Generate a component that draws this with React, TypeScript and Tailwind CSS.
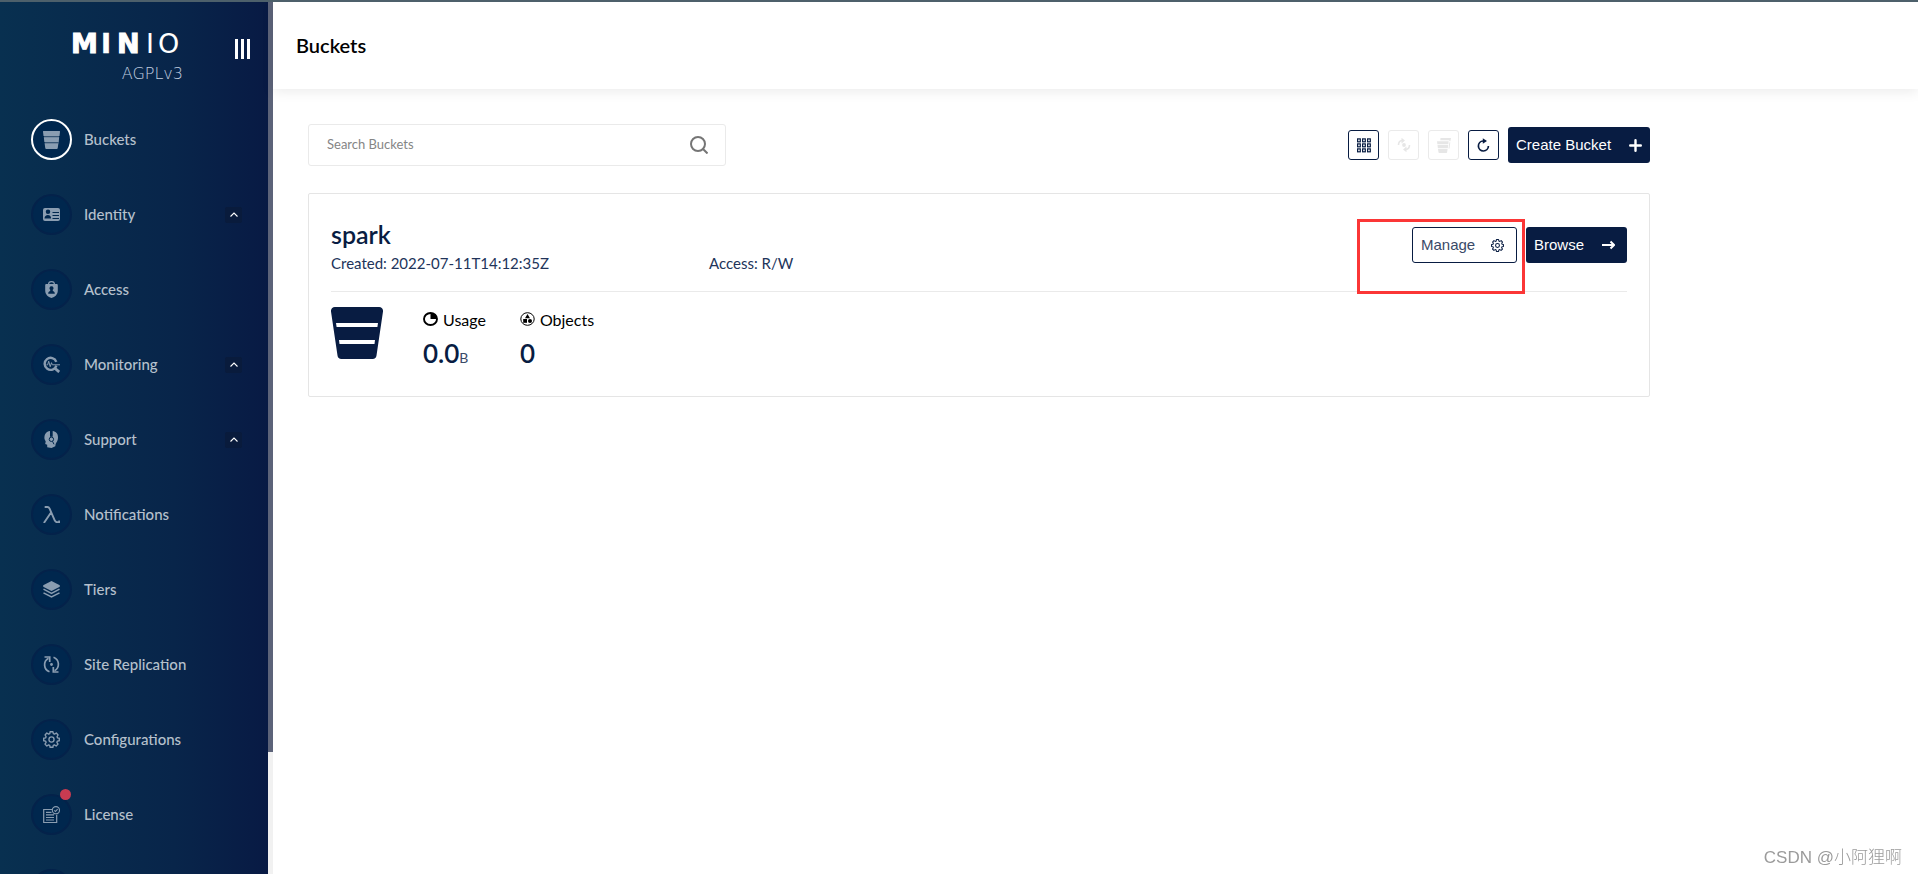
import type { ReactNode } from "react";
import { useState } from "react";
import clsx from "clsx";

type IconProps = { className?: string };

function BucketIcon({ className }: IconProps) {
  return (
    <svg viewBox="0 0 52 52" fill="currentColor" className={className}>
      <path
        fillRule="evenodd"
        d="M4 0h44a4 4 0 0 1 4 4.500L45.500 48.500a4 4 0 0 1-4 3.500h-31a4 4 0 0 1-4-3.500L0 4.500A4 4 0 0 1 4 0ZM5 16l.600 4h40.800l.600-4ZM8 33l.500 4h35l.500-4Z"
      />
    </svg>
  );
}

function SmallBucketIcon({ className }: IconProps) {
  return (
    <svg viewBox="0 0 17 18" fill="currentColor" className={className}>
      <path d="M.6 0h15.800a.6.6 0 0 1 .6.7L16.500 5H.5L0 .7A.6.6 0 0 1 .6 0ZM.8 6.200h15.400l-.6 4.800H1.400ZM1.600 12.200h13.800l-.7 5a1 1 0 0 1-1 .8H3.300a1 1 0 0 1-1-.8Z" />
      <path d="M1 5h15v7.500H1.800Z" opacity=".4" />
    </svg>
  );
}

function IdentityIcon({ className }: IconProps) {
  return (
    <svg viewBox="0 0 17 17" className={className}>
      <path
        fill="currentColor"
        fillRule="evenodd"
        d="M2 2h13a2 2 0 0 1 2 2v9a2 2 0 0 1-2 2H2a2 2 0 0 1-2-2V4a2 2 0 0 1 2-2ZM5 3.500A2 2 0 0 0 5 8a2 2 0 0 0 0-4.500ZM1.500 12.500h6.600c0-2.200-1.200-3.500-3.200-3.500s-3.400 1.300-3.400 3.500ZM9.500 6v1H16V6ZM9.500 9v1H16V9ZM9.500 12v1H16v-1Z"
      />
    </svg>
  );
}

function AccessIcon({ className }: IconProps) {
  return (
    <svg viewBox="0 0 17 17" className={className}>
      <path d="M5.500 3.500C5.500 1.500 6.800.6 8.500.6s3 .9 3 2.900" fill="none" stroke="currentColor" strokeWidth="1.100" />
      <path
        fill="currentColor"
        fillRule="evenodd"
        d="M3.500 3h10c.8 0 1.300.5 1.300 1.300v5.200c0 4-2.800 6.500-6.300 7.500-3.500-1-6.300-3.500-6.300-7.500V4.300C2.200 3.500 2.700 3 3.500 3Zm5 2.200a2 2 0 0 0-1.100 3.700l-.4 1c-1.200.4-1.800 1.300-1.800 2.800h6.600c0-1.500-.6-2.400-1.800-2.800l-.4-1A2 2 0 0 0 8.500 5.200Z"
      />
    </svg>
  );
}

function MonitoringIcon({ className }: IconProps) {
  return (
    <svg viewBox="0 0 17 17" fill="none" stroke="currentColor" className={className}>
      <path d="M13.300 5.800a6 6 0 1 0 .1 3.800" strokeWidth="2.400" />
      <path d="M3.500 8.800h1.200l1-3.600 1.500 5.500 1.300-4 .8 2.100H17" strokeWidth="1" />
      <path d="m11.500 12 4.700 4" strokeWidth="2.800" />
    </svg>
  );
}

function SupportIcon({ className }: IconProps) {
  return (
    <svg viewBox="0 0 17 17" className={className}>
      <path
        fill="currentColor"
        d="M7 0v5.700h2.700V0c3.300.4 5.300 2.600 5.300 6.200 0 2.600-.6 3.900-1.600 5.300-.6 1-.9 2-1.100 3.800L8.500 17l-4.300-.8v-2.400l-2-.8.5-2.600L1.500 8C1 3.200 3.200.6 7 0Z"
      />
      <path d="m9.500 10.300 1.500 3" stroke="#00274e" strokeWidth="1" />
      <circle cx="8.400" cy="8.300" r="2.200" fill="none" stroke="#00274e" />
    </svg>
  );
}

function LambdaIcon({ className }: IconProps) {
  return (
    <svg viewBox="0 0 17 17" fill="none" stroke="currentColor" strokeWidth="1.900" className={className}>
      <path d="M1.800 1h2.600c1.100 0 1.700.6 2.200 1.700l5 11.500c.6 1.400 1.200 2 2.400 2h2.200v-1.800M8.200 6.200.9 17M2.600.2v1.900" />
    </svg>
  );
}

function TiersIcon({ className }: IconProps) {
  return (
    <svg viewBox="0 0 17 17" className={className}>
      <path d="m8.500 0 8.300 4.200v1.500L8.500 10 .2 5.700V4.200Z" fill="currentColor" />
      <path d="m.5 8.200 8 4.200 8-4.200M.5 11.800l8 4.200 8-4.200" fill="none" stroke="currentColor" strokeWidth="1.500" />
    </svg>
  );
}

function ReplicationIcon({ className }: IconProps) {
  return (
    <svg viewBox="0 0 17 17" fill="none" stroke="currentColor" strokeWidth="1.700" className={className}>
      <path d="M6.500 15.800A7.500 7.500 0 0 1 5.500 2.200M10.500 1.200a7.500 7.500 0 0 1 1 13.600" />
      <path d="M1.500 1h5.200v5M15.500 16h-5.200v-5" />
      <circle cx="8.500" cy="8.500" r="1.400" fill="currentColor" stroke="none" />
    </svg>
  );
}

function GearIcon({ className }: IconProps) {
  return (
    <svg viewBox="0 0 24 24" fill="none" stroke="currentColor" strokeWidth="1.900" strokeLinejoin="round" className={className}>
      <circle cx="12" cy="12" r="3.600" />
      <path d="M10 1h4l.6 2.800 1.700.7 2.500-1.600 2.500 2.700-1.500 2.500.7 1.600L23 10.200v3.600l-2.700.5-.7 1.700 1.600 2.500-2.600 2.600-2.500-1.600-1.600.7L14 23h-4l-.5-2.800-1.600-.7-2.500 1.600-2.600-2.600L4.400 16l-.7-1.700L1 13.800v-3.600l2.700-.5.7-1.600-1.500-2.500 2.500-2.700 2.500 1.600 1.700-.7Z" />
    </svg>
  );
}

function LicenseIcon({ className }: IconProps) {
  return (
    <svg viewBox="0 0 17 17" fill="none" stroke="currentColor" className={className}>
      <path d="M9 3.500H.7v13h13V8.700" strokeWidth="1.200" />
      <path d="M3 6.300h5.500M3 8.900h8M3 11.500h8M3 14h8" strokeWidth="1.200" />
      <circle cx="12.900" cy="4.200" r="3.600" strokeWidth="1.100" />
      <path d="m11.300 4.300 1.200 1.200 2.100-2.400" strokeWidth="1.100" />
    </svg>
  );
}

function SearchIcon({ className }: IconProps) {
  return (
    <svg viewBox="0 0 18 18" fill="none" stroke="currentColor" strokeWidth="2" className={className}>
      <circle cx="8" cy="8" r="7" />
      <path d="m12.500 12.500 5 5" />
    </svg>
  );
}

function GridIcon({ className }: IconProps) {
  const cells = [0, 5, 10];
  return (
    <svg viewBox="0 0 14 15" fill="none" stroke="currentColor" strokeWidth="1.200" className={className}>
      {cells.map((y) =>
        cells.map((x) => <rect key={`${x}-${y}`} x={x + 0.6} y={y + 0.9} width="2.700" height="2.900" />)
      )}
    </svg>
  );
}

function LifecycleIcon({ className }: IconProps) {
  return (
    <svg viewBox="0 0 14 14" fill="none" stroke="currentColor" strokeWidth="1.600" className={className}>
      <path d="M1.500 7c0-2.700 1.300-4.200 3.700-4.500M12.500 7c0 2.700-1.300 4.200-3.700 4.500" />
      <path d="M4.500-.2 8 2.500l-3.500 3ZM9.500 8.500 6 11.500l3.500 2.700Z" fill="currentColor" stroke="none" />
      <circle cx="7" cy="7" r="1.900" fill="currentColor" stroke="none" />
    </svg>
  );
}

function MultiBucketIcon({ className }: IconProps) {
  return (
    <svg viewBox="0 0 14 15" fill="currentColor" className={className}>
      <path d="M3.500 0H14l-.6 3.200h-1V2.300H3.300ZM12.400 4.300h.9l-.8 6.200h-1ZM0 3.200h11.700l-.4 3H.4ZM.5 7h10.700l-.4 3.300H.9ZM1 11.100h9.600l-.5 3.100a.8.8 0 0 1-.8.8h-7a.8.8 0 0 1-.8-.8Z" />
    </svg>
  );
}

function RefreshIcon({ className }: IconProps) {
  return (
    <svg viewBox="0 0 13 14" fill="none" stroke="currentColor" strokeWidth="1.700" className={className}>
      <path d="M7.500 3H6.200a5 5 0 1 0 5.200 5" />
      <path d="M5.800.2 10 3 5.800 5.800Z" fill="currentColor" stroke="none" />
    </svg>
  );
}

function PlusIcon({ className }: IconProps) {
  return (
    <svg viewBox="0 0 13 13" stroke="currentColor" strokeWidth="2.400" strokeLinecap="round" className={className}>
      <path d="M6.500 1.200v10.600M1.200 6.500h10.600" />
    </svg>
  );
}

function ArrowIcon({ className }: IconProps) {
  return (
    <svg viewBox="0 0 13 10" fill="none" stroke="currentColor" strokeWidth="2" className={className}>
      <path d="M0 5h11.500" />
      <path d="M8.500 1.500 12 5 8.500 8.500" />
    </svg>
  );
}

function UsageIcon({ className }: IconProps) {
  return (
    <svg viewBox="0 0 15 14" className={className}>
      <ellipse cx="7.500" cy="7" rx="6.500" ry="6" fill="none" stroke="currentColor" strokeWidth="1.900" />
      <path d="M7.500 1v6h6.500A6.500 6 0 0 0 7.500 1Z" fill="currentColor" />
    </svg>
  );
}

function ObjectsIcon({ className }: IconProps) {
  return (
    <svg viewBox="0 0 15 14" fill="currentColor" className={className}>
      <ellipse cx="7.500" cy="7" rx="6.700" ry="6.300" fill="none" stroke="currentColor" />
      <path d="M7.500 2 10 6.300H5Z" />
      <rect x="3.200" y="7" width="3.800" height="3.800" />
      <circle cx="10" cy="9" r="2" />
    </svg>
  );
}

function Logo() {
  return (
    <div className="flex flex-col items-end text-white">
      <svg viewBox="0 0 112 36" width="112" height="36" fill="currentColor" role="img" aria-label="MinIO">
        <g fontFamily="DejaVu Sans" fontSize="27" fontWeight="700" stroke="currentColor">
          <text x="0" y="29">M</text>
          <text x="30" y="29" strokeWidth=".5">I</text>
          <text x="46" y="29">N</text>
        </g>
        <g fontFamily="DejaVu Sans" fontSize="27" fontWeight="400">
          <text x="75" y="29">I</text>
          <text x="87" y="29">O</text>
        </g>
      </svg>
      <span className="mt-0.5 font-['DejaVu_Sans'] text-base leading-6 font-light text-[#c3cfe0]">AGPLv3</span>
    </div>
  );
}

interface MenuItemProps {
  label: string;
  icon: ReactNode;
  active?: boolean;
  expandable?: boolean;
  badge?: boolean;
}

function MenuItem({ label, icon, active, expandable, badge }: MenuItemProps) {
  return (
    <li className="h-[75px]">
      <a href="#" className="flex items-center pr-[26px] pl-[31px]">
        <span
          className={clsx(
            "relative flex h-[41px] w-[41px] items-center justify-center rounded-full border-2 bg-[#00274e] text-[#8a9db1]",
            active ? "border-white" : "border-[#04224a]"
          )}
        >
          {icon}
          {badge && <span className="absolute -top-[7px] -right-px h-[11px] w-[11px] rounded-full bg-[#c83b51]" />}
        </span>
        <span className="ml-3 flex-1 text-[15px] font-medium text-[#b5c0cc]">{label}</span>
        {expandable && (
          <span className="flex h-4 w-[17px] items-center justify-center rounded-xs bg-[#091b3c]">
            <svg viewBox="0 0 8 5" className="h-[5px] w-2" fill="none" stroke="#fff" strokeWidth="1.100">
              <path d="M.5 4.500 4 1l3.500 3.500" />
            </svg>
          </span>
        )}
      </a>
    </li>
  );
}

const menu: MenuItemProps[] = [
  { label: "Buckets", icon: <SmallBucketIcon className="h-[18px] w-[17px]" />, active: true },
  { label: "Identity", icon: <IdentityIcon className="size-[17px]" />, expandable: true },
  { label: "Access", icon: <AccessIcon className="size-[17px]" /> },
  { label: "Monitoring", icon: <MonitoringIcon className="size-[17px]" />, expandable: true },
  { label: "Support", icon: <SupportIcon className="size-[17px]" />, expandable: true },
  { label: "Notifications", icon: <LambdaIcon className="size-[17px]" /> },
  { label: "Tiers", icon: <TiersIcon className="size-[17px]" /> },
  { label: "Site Replication", icon: <ReplicationIcon className="size-[17px]" /> },
  { label: "Configurations", icon: <GearIcon className="size-[17px]" /> },
  { label: "License", icon: <LicenseIcon className="size-[17px]" />, badge: true },
];

function Sidebar() {
  return (
    <aside className="flex shrink-0 overflow-hidden">
      <div className="w-[268px] bg-linear-to-r from-[#083050] via-[#08254a] via-65% to-[#081a44]">
        <div className="flex h-[117px] items-start justify-between pt-[22px] pr-[18px] pl-[71px]">
          <Logo />
          <button type="button" aria-label="Collapse menu" className="mt-[15px] flex gap-[3px]">
            <span className="h-5 w-[3px] bg-white" />
            <span className="h-5 w-[3px] bg-white" />
            <span className="h-5 w-[3px] bg-white" />
          </button>
        </div>
        <nav>
          <ul>
            {menu.map((item) => (
              <MenuItem key={item.label} {...item} />
            ))}
            <li className="pl-[31px]">
              <span className="block h-[41px] w-[41px] rounded-full border-2 border-[#04224a] bg-[#00274e]" />
            </li>
          </ul>
        </nav>
      </div>
      <div className="w-[5px] bg-[#f1f1f1]">
        <div className="h-[86%] bg-[#5c6379]" />
      </div>
    </aside>
  );
}

function ToolButton({ label, disabled, children }: { label: string; disabled?: boolean; children: ReactNode }) {
  return (
    <button
      type="button"
      aria-label={label}
      disabled={disabled}
      className={clsx(
        "flex h-[30px] w-[31px] items-center justify-center rounded-[3px] border",
        disabled ? "border-[#eaeaea] text-[#e6e6e6]" : "border-[#081c42] text-[#081c42]"
      )}
    >
      {children}
    </button>
  );
}

function BucketCard() {
  return (
    <section className="mt-[27px] rounded-xs border border-[#e5e5e5] px-[22px] pt-6 pb-[23px] text-[#081c42]">
      <div className="flex items-start justify-between border-b border-[#eaeaea] pb-4">
        <div>
          <h2 className="text-[25px] leading-8 font-semibold">spark</h2>
          <div className="flex pt-px text-[15px] leading-6 text-[#22345a]">
            <p className="w-[378px]">Created: 2022-07-11T14:12:35Z</p>
            <p>Access: R/W</p>
          </div>
        </div>
        <div className="relative mt-[9px] flex gap-[9px] font-['Liberation_Sans'] text-[15px]">
          <button
            type="button"
            className="flex h-9 w-[105px] items-center justify-between rounded-[3px] border border-[#081c42] pr-3 pl-2 text-[#3a4a68]"
          >
            Manage
            <GearIcon className="size-[13px] text-[#081c42]" />
          </button>
          <button
            type="button"
            className="flex h-9 w-[101px] items-center justify-between rounded-[3px] bg-[#081c42] pr-3 pl-2 text-white"
          >
            Browse
            <ArrowIcon className="h-2.5 w-[13px]" />
          </button>
          <div className="pointer-events-none absolute -top-2 right-[102px] h-[75px] w-[168px] border-3 border-[#fb3636]" />
        </div>
      </div>
      <div className="flex pt-[15px]">
        <BucketIcon className="size-[52px]" />
        <div className="ml-10">
          <div className="flex gap-[5px] pt-px text-base text-black">
            <UsageIcon className="mt-1 h-3.5 w-[15px]" />
            Usage
          </div>
          <div className="pt-px text-[26px] leading-10 font-semibold">
            0.0<span className="text-sm font-normal text-[#3a4a68]">B</span>
          </div>
        </div>
        <div className="ml-[34px]">
          <div className="flex gap-[5px] pt-px text-base text-black">
            <ObjectsIcon className="mt-1 h-3.5 w-[15px]" />
            Objects
          </div>
          <div className="pt-px text-[26px] leading-10 font-semibold">0</div>
        </div>
      </div>
    </section>
  );
}

export default function App() {
  const [search, setSearch] = useState("");

  return (
    <div className="flex h-screen overflow-hidden border-t-2 border-[#4d606b] bg-white font-['Lato',sans-serif]">
      <Sidebar />
      <main className="min-w-0 flex-1">
        <header className="flex h-[87px] items-center px-[23px] pb-0.5 shadow-[0_3px_12px_rgba(0,0,0,0.08)]">
          <h1 className="text-xl font-semibold text-black">Buckets</h1>
        </header>
        <div className="mx-[35px] max-w-[1342px] pt-[35px]">
          <div className="flex items-center justify-between">
            <label className="flex h-[42px] w-[418px] items-center rounded-[3px] border border-[#eaeaea] pr-[17px] pl-[18px] text-[#757575]">
              <input
                type="text"
                aria-label="Search Buckets"
                placeholder="Search Buckets"
                value={search}
                onChange={(e) => setSearch(e.target.value)}
                className="min-w-0 flex-1 text-[13px] outline-none placeholder:text-[#858585]"
              />
              <SearchIcon className="size-[18px]" />
            </label>
            <div className="flex items-center gap-[9px]">
              <ToolButton label="Select multiple">
                <GridIcon className="h-[15px] w-3.5" />
              </ToolButton>
              <ToolButton label="Set lifecycle" disabled>
                <LifecycleIcon className="size-3.5" />
              </ToolButton>
              <ToolButton label="Set replication" disabled>
                <MultiBucketIcon className="h-[15px] w-3.5" />
              </ToolButton>
              <ToolButton label="Refresh">
                <RefreshIcon className="h-3.5 w-[13px]" />
              </ToolButton>
              <button
                type="button"
                className="flex h-9 w-[142px] items-center justify-between rounded-[3px] bg-[#081c42] px-2 font-['Liberation_Sans'] text-[15px] text-white"
              >
                Create Bucket
                <PlusIcon className="size-[13px]" />
              </button>
            </div>
          </div>
          <BucketCard />
        </div>
      </main>
      <div className="pointer-events-none fixed right-4 bottom-1 font-['Liberation_Sans','Noto_Sans_CJK_SC',sans-serif] text-[17px] font-light text-[#9b9b9b]">
        CSDN @小阿狸啊
      </div>
    </div>
  );
}
